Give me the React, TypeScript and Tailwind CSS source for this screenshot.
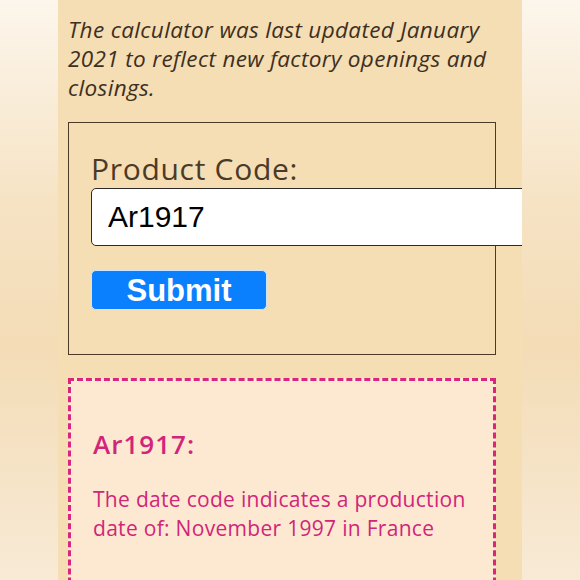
import * as React from "react";

export default function App() {
  return (
    <div className="flex h-[580px] w-[580px] justify-center overflow-hidden bg-[linear-gradient(180deg,#fcf6ec_0%,#f6e3c4_35%,#f3dcb6_60%,#f8ead6_100%)]">
      <div
        className="flex w-[464px] flex-col overflow-hidden bg-[#f5ddb4] pl-[10px] pr-[26px]"
        style={{ fontFamily: "'Open Sans', Lato, sans-serif" }}
      >
        <p className="mt-[15px] shrink-0 text-[22.5px] leading-[29px] tracking-[0.35px] text-[#3d3022] italic">
          The calculator was last updated January 2021 to reflect new factory
          openings and closings.
        </p>

        <form
          className="mt-[20px] flex h-[233px] shrink-0 flex-col border border-[#4b3a28] pl-[22px]"
          onSubmit={(e) => e.preventDefault()}
        >
          <label
            htmlFor="code"
            className="mt-[27px] text-[30px] leading-[38px] tracking-[0.7px] text-[#4b3a28]"
          >
            Product Code:
          </label>
          <input
            id="code"
            defaultValue="Ar1917"
            className="h-[58px] w-[460px] shrink-0 rounded-[5px] border-[1.5px] border-[#2e2a26] bg-white px-[16px] text-[30px] text-black outline-none"
            style={{ fontFamily: "'Liberation Sans', Arial, sans-serif" }}
          />
          <button
            type="submit"
            className="mt-[24px] h-[40px] w-[176px] rounded-[5px] border border-[#cfe4ff] bg-[#0b80ff] text-[31px] leading-none font-bold text-white"
            style={{ fontFamily: "'Liberation Sans', Arial, sans-serif" }}
          >
            Submit
          </button>
        </form>

        <div className="mt-[23px] h-[260px] shrink-0 border-[3px] border-dashed border-[#d9267c] bg-[#fde9d1] pt-[46px] pl-[22px] text-[#d1257a]">
          <h3 className="text-[26px] leading-[34px] font-semibold tracking-[1px]">
            Ar1917:
          </h3>
          <p className="mt-[24px] text-[21px] leading-[29px] tracking-[0.3px]">
            The date code indicates a production date of: November 1997 in
            France
          </p>
        </div>
      </div>
    </div>
  );
}
